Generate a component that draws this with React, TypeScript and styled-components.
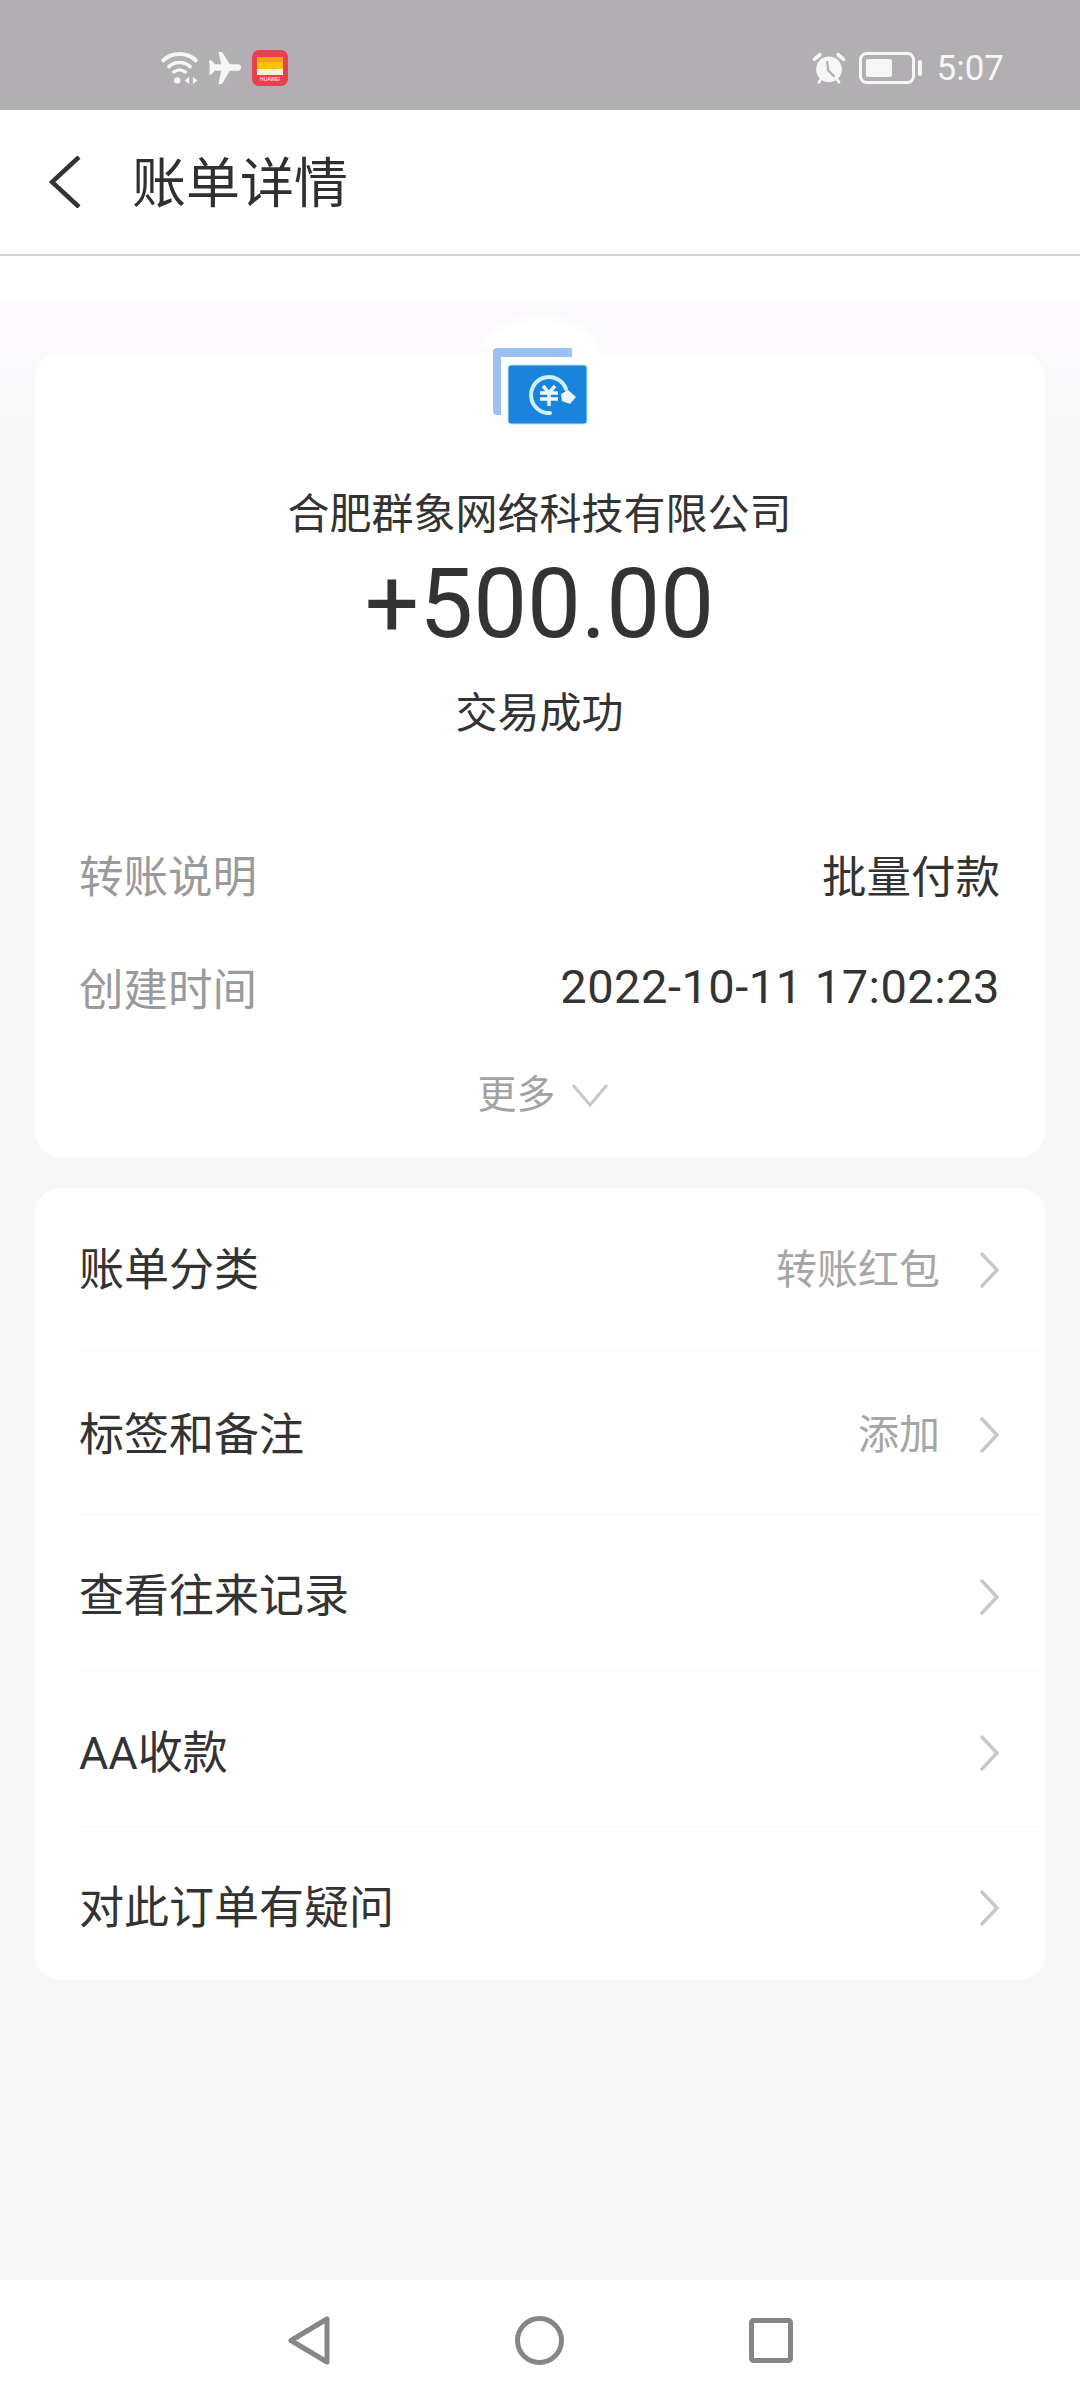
import React from "react";
import styled, { createGlobalStyle } from "styled-components";

const GlobalStyle = createGlobalStyle`
  html, body {
    margin: 0;
    padding: 0;
    background: #f7f7f7;
  }
  * {
    box-sizing: border-box;
  }
`;

const Page = styled.div`
  width: 1080px;
  height: 2400px;
  display: flex;
  flex-direction: column;
  background: #f7f7f7;
  color: #333;
  font-family: Roboto, "Noto Sans CJK SC", sans-serif;
`;

const StatusBar = styled.div`
  height: 110px;
  flex: none;
  display: flex;
  align-items: center;
  justify-content: space-between;
  padding: 26px 76px 0 159px;
  background: #b1afb1;
  color: #f6f6f6;
`;

const StatusGroup = styled.div`
  display: flex;
  align-items: center;
`;

const ClockText = styled.span`
  font-size: 35px;
  margin-left: 15px;
`;

const AppIcon = styled.div`
  width: 36px;
  height: 36px;
  margin-left: 9px;
  padding: 7px 5px 0;
  border-radius: 7px;
  background: #ea3f50;
  display: flex;
  flex-direction: column;
  align-items: center;
`;

const AppBars = styled.div`
  width: 26px;
  height: 18px;
  background: linear-gradient(#fb9d1c 0 30%, #fdbe0e 30% 65%, #fff4d2 65% 100%);
`;

const AppLabel = styled.span`
  font-size: 5px;
  line-height: 9px;
  color: #fff;
  font-family: "Liberation Sans", sans-serif;
`;

const Header = styled.div`
  height: 146px;
  flex: none;
  display: flex;
  align-items: center;
  padding: 0 0 0 49px;
  background: #fff;
  border-bottom: 2px solid #d4d4d4;
`;

const HeaderTitle = styled.h1`
  margin: 5px 0 0 51px;
  font-size: 54px;
  font-weight: 400;
  line-height: 1;
  color: #303030;
`;

const Content = styled.div`
  flex: 1;
  display: flex;
  flex-direction: column;
  gap: 31px;
  padding: 97px 35px 0 35px;
  background: linear-gradient(#fff 0 47px, #fbf9fc 47px 97px, #f9f8fa 130px, #f7f7f7 200px);
`;

const Card = styled.section`
  background: #fff;
  border-radius: 26px;
`;

const SummaryCard = styled(Card)`
  height: 804px;
  display: flex;
  flex-direction: column;
  padding: 0 45px 0 44px;
`;

const BadgeSlot = styled.div`
  height: 0;
  display: flex;
  justify-content: center;
`;

const Badge = styled.div`
  position: relative;
  width: 100px;
  height: 82px;
  margin-top: -8px;
  flex: none;

  &::before {
    content: "";
    position: absolute;
    left: -8px;
    top: -28px;
    width: 116px;
    height: 70px;
    border-radius: 50%;
    background: #fff;
    filter: blur(4px);
  }

  svg {
    position: relative;
    display: block;
  }
`;

const Merchant = styled.div`
  margin-top: 132px;
  text-align: center;
  font-size: 42px;
  line-height: 60px;
`;

const Amount = styled.div`
  margin-top: 5px;
  text-align: center;
  font-size: 96px;
  line-height: 108px;
  color: #333;
`;

const TradeStatus = styled.div`
  margin-top: 26px;
  text-align: center;
  font-size: 42px;
  line-height: 60px;
`;

const InfoList = styled.div`
  margin-top: 97px;
  display: flex;
  flex-direction: column;
  gap: 49px;
`;

const InfoRow = styled.div`
  display: flex;
  justify-content: space-between;
  align-items: center;
  height: 64px;
  font-size: 44.5px;
`;

const InfoLabel = styled.span`
  color: #9a9a9a;
`;

const DateText = styled.span`
  font-size: 47px;
  letter-spacing: 0.5px;
`;

const MoreRow = styled.div`
  margin-top: 52px;
  padding-left: 7px;
  display: flex;
  justify-content: center;
  align-items: center;
  gap: 15px;
  font-size: 39px;
  line-height: 50px;
  color: #a3a3a3;
`;

const ActionCard = styled(Card)`
  height: 792px;
  padding-left: 44px;
  display: flex;
  flex-direction: column;
`;

const ActionRow = styled.div<{ $height: number; $lift: number; $last?: boolean }>`
  height: ${({ $height }) => $height}px;
  flex: none;
  display: flex;
  align-items: center;
  padding: 0 45px ${({ $lift }) => $lift}px 0;
  border-bottom: ${({ $last }) => ($last ? "none" : "2px solid #fafafa")};
`;

const ActionLabel = styled.span`
  flex: 1;
  font-size: 45px;
  color: #333;
`;

const ActionValue = styled.span`
  font-size: 41px;
  color: #a6a6a6;
  margin-right: 38px;
`;

const ChevronSlot = styled.span`
  display: flex;
  margin-top: 8px;
`;

const NavBar = styled.div`
  height: 120px;
  flex: none;
  display: flex;
  justify-content: center;
  align-items: center;
  gap: 185px;
  background: #fff;
`;

const WifiIcon = () => (
  <svg width="42" height="34" viewBox="1 1 40 37" fill="none" stroke="#f6f6f6" strokeLinecap="round">
    <path d="M3 11 C12 2 29 2 38 11" strokeWidth="4.5" />
    <path d="M9 18 C15 12 26 12 32 18" strokeWidth="4" />
    <path d="M14 24 C18 21 23 21 27 24" strokeWidth="3.5" />
    <circle cx="18" cy="33" r="3.5" fill="#f6f6f6" stroke="none" />
    <path d="M31 29 L26 33 L31 37 Z" fill="#f6f6f6" stroke="none" />
    <path d="M35 29 L40 33 L35 37 Z" fill="#f6f6f6" stroke="none" />
  </svg>
);

const PlaneIcon = () => (
  <svg width="36" height="34" viewBox="0 0 36 36" style={{ marginLeft: 6 }}>
    <path
      d="M11 1 L15 1 L23 14 L32 14 C36 14 36 21 32 21 L23 21 L15 35 L11 35 L14 21 L7 21 L4 25 L1 25 L2 18 L1 10 L4 10 L7 14 L14 14 Z"
      fill="#f6f6f6"
    />
  </svg>
);

const AlarmIcon = () => (
  <svg width="36" height="33" viewBox="0 0 36 36">
    <circle cx="18" cy="19" r="14" fill="#f6f6f6" />
    <path d="M2 8 L8 3" stroke="#f6f6f6" strokeWidth="4" strokeLinecap="round" />
    <path d="M34 8 L28 3" stroke="#f6f6f6" strokeWidth="4" strokeLinecap="round" />
    <path d="M7 33 L9 30 M29 33 L27 30" stroke="#f6f6f6" strokeWidth="3" strokeLinecap="round" />
    <path d="M16 10 L17 20 L24 27" stroke="#b1afb1" strokeWidth="2.5" fill="none" />
  </svg>
);

const BatteryIcon = () => (
  <svg width="63" height="32" viewBox="0 0 63 32" style={{ marginLeft: 12 }}>
    <rect x="1.5" y="1.5" width="53" height="29" rx="6" fill="none" stroke="#f6f6f6" strokeWidth="3" />
    <rect x="7" y="7" width="26" height="18" rx="2" fill="#f6f6f6" />
    <rect x="59" y="8" width="4" height="16" rx="2" fill="#f6f6f6" />
  </svg>
);

const BackIcon = () => (
  <svg width="32" height="52" viewBox="0 0 32 52" fill="none">
    <path d="M30 1 L3 26 L30 51" stroke="#333" strokeWidth="4.5" />
  </svg>
);

const TransferBadge = () => (
  <svg width="100" height="82" viewBox="0 0 100 82">
    <path d="M7 3 H80 Q82 3 82 5 V12 H11 V70 H7 Q3 70 3 66 V7 Q3 3 7 3 Z" fill="#9bc1f0" />
    <rect x="18" y="20" width="79" height="59" rx="3" fill="#1a84dc" stroke="#b5eaff" strokeWidth="1" />
    <path d="M60 68 A18 18 0 1 1 76 44" fill="none" stroke="#c9f1ff" strokeWidth="4" strokeLinecap="round" />
    <path d="M71 49 L78 45 L86 52 L80 59 L72 56 Z" fill="#e8f6ff" />
    <path d="M53 41 L59 48 L65 41 M50 48 H68 M50 54 H68 M59 48 V61" fill="none" stroke="#e8f6ff" strokeWidth="3.5" />
  </svg>
);

const DownChevron = () => (
  <svg width="38" height="24" viewBox="0 0 38 24" fill="none">
    <path d="M2 2 L19 22 L36 2" stroke="#c8c8c8" strokeWidth="3" />
  </svg>
);

const RightChevron = () => (
  <svg width="22" height="38" viewBox="0 0 22 38" fill="none">
    <path d="M3 2 L19 19 L3 36" stroke="#c8c8c8" strokeWidth="3.5" />
  </svg>
);

const NavBack = () => (
  <svg width="42" height="49" viewBox="0 0 42 49" fill="none">
    <path d="M3 24.5 L39 3 V46 Z" stroke="#868686" strokeWidth="5" strokeLinejoin="round" />
  </svg>
);

const NavHome = () => (
  <svg width="49" height="49" viewBox="0 0 49 49" fill="none">
    <circle cx="24.5" cy="24.5" r="22" stroke="#868686" strokeWidth="5" />
  </svg>
);

const NavRecent = () => (
  <svg width="44" height="45" viewBox="0 0 44 45" fill="none">
    <rect x="2.5" y="2.5" width="39" height="40" rx="2" stroke="#868686" strokeWidth="5" />
  </svg>
);

const actions = [
  { label: "账单分类", value: "转账红包", height: 164, lift: 6 },
  { label: "标签和备注", value: "添加", height: 163, lift: 3 },
  { label: "查看往来记录", height: 157, lift: 0 },
  { label: "AA收款", height: 156, lift: 0 },
  { label: "对此订单有疑问", height: 152, lift: 0 },
];

export default function App() {
  return (
    <Page>
      <GlobalStyle />
      <StatusBar>
        <StatusGroup>
          <WifiIcon />
          <PlaneIcon />
          <AppIcon>
            <AppBars />
            <AppLabel>HUAWEI</AppLabel>
          </AppIcon>
        </StatusGroup>
        <StatusGroup>
          <AlarmIcon />
          <BatteryIcon />
          <ClockText>5:07</ClockText>
        </StatusGroup>
      </StatusBar>
      <Header>
        <BackIcon />
        <HeaderTitle>账单详情</HeaderTitle>
      </Header>
      <Content>
        <SummaryCard>
          <BadgeSlot>
            <Badge>
              <TransferBadge />
            </Badge>
          </BadgeSlot>
          <Merchant>合肥群象网络科技有限公司</Merchant>
          <Amount>+500.00</Amount>
          <TradeStatus>交易成功</TradeStatus>
          <InfoList>
            <InfoRow>
              <InfoLabel>转账说明</InfoLabel>
              <span>批量付款</span>
            </InfoRow>
            <InfoRow>
              <InfoLabel>创建时间</InfoLabel>
              <DateText>2022-10-11 17:02:23</DateText>
            </InfoRow>
          </InfoList>
          <MoreRow>
            更多
            <DownChevron />
          </MoreRow>
        </SummaryCard>
        <ActionCard>
          {actions.map((item, i) => (
            <ActionRow
              key={item.label}
              $height={item.height}
              $lift={item.lift}
              $last={i === actions.length - 1}
            >
              <ActionLabel>{item.label}</ActionLabel>
              {item.value && <ActionValue>{item.value}</ActionValue>}
              <ChevronSlot>
                <RightChevron />
              </ChevronSlot>
            </ActionRow>
          ))}
        </ActionCard>
      </Content>
      <NavBar>
        <NavBack />
        <NavHome />
        <NavRecent />
      </NavBar>
    </Page>
  );
}
